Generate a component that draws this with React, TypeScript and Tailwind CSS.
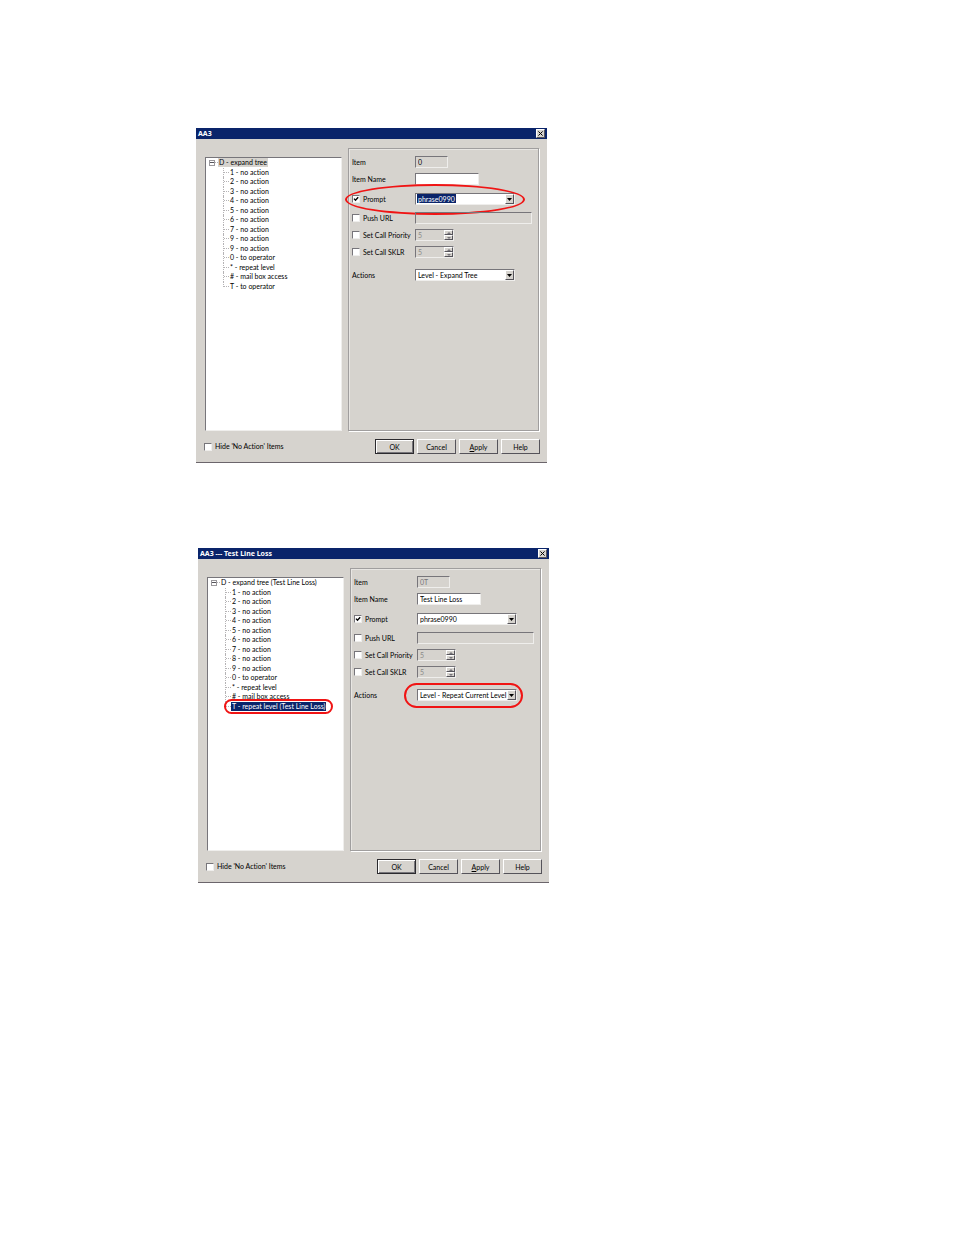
import type { ReactNode } from "react";

interface TreeEntry {
  key: string;
  action: string;
}

interface DialogProps {
  id: string;
  title: string;
  root: string;
  entries: TreeEntry[];
  selected: string;
  item: string;
  itemDim?: boolean;
  itemName: string;
  promptSelected?: boolean;
  action: string;
  circled: "prompt" | "action";
}

const noActions: TreeEntry[] = ["1", "2", "3", "4", "5", "6", "7", "8", "9"].map((key) => ({
  key,
  action: "no action",
}));

const commonEntries: TreeEntry[] = [
  ...noActions,
  { key: "0", action: "to operator" },
  { key: "*", action: "repeat level" },
  { key: "#", action: "mail box access" },
];

// the first tree lists key 9 twice, in place of 8
const firstEntries: TreeEntry[] = [
  ...commonEntries.map((e) => (e.key === "8" ? { ...e, key: "9" } : e)),
  { key: "T", action: "to operator" },
];

const secondEntries: TreeEntry[] = [...commonEntries, { key: "T", action: "repeat level (Test Line Loss)" }];

const sunken = "border border-t-[#77757a] border-l-[#77757a] border-r-[#efeeec] border-b-[#efeeec]";
const raised = "border border-t-white border-l-white border-r-[#55535a] border-b-[#55535a]";

const CloseIcon = () => (
  <svg className="h-[5px] w-[5px]" viewBox="0 0 6 6" stroke="#000" strokeWidth="1.2">
    <path d="M0.5 0.5L5.5 5.5M5.5 0.5L0.5 5.5" />
  </svg>
);

const ArrowIcon = () => (
  <svg className="h-[3px] w-[5px]" viewBox="0 0 5 3">
    <path d="M0 0H5L2.5 3Z" fill="#000" />
  </svg>
);

const SpinIcon = ({ down }: { down?: boolean }) => (
  <svg className="h-[2px] w-[4px]" viewBox="0 0 4 2">
    <path d={down ? "M0 0H4L2 2Z" : "M0 2H4L2 0Z"} fill="#77757a" />
  </svg>
);

function Check({ id, checked }: { id: string; checked?: boolean }) {
  return (
    <span className="relative mr-[3px] flex h-[8px] w-[8px] shrink-0">
      <input
        id={id}
        type="checkbox"
        defaultChecked={checked}
        className={`peer h-[8px] w-[8px] appearance-none bg-white ${sunken}`}
      />
      <svg
        className="pointer-events-none absolute inset-0 hidden h-[8px] w-[8px] peer-checked:block"
        viewBox="0 0 8 8"
        fill="none"
        stroke="#000"
        strokeWidth="1.4"
      >
        <path d="M2 3.6L3.5 5.3L6.2 2.3" />
      </svg>
    </span>
  );
}

function Select({ id, value, highlight }: { id: string; value: string; highlight?: boolean }) {
  return (
    <span className={`relative flex h-[12px] w-[100px] bg-white ${sunken}`}>
      <select
        id={id}
        defaultValue={value}
        className={`w-full appearance-none pl-[2px] leading-[10px] outline-none ${
          highlight
            ? "bg-[linear-gradient(#0a246a,#0a246a)] bg-[length:39px_9px] bg-[position:1px_0px] bg-no-repeat text-white"
            : ""
        }`}
      >
        <option>{value}</option>
      </select>
      <span
        className={`pointer-events-none absolute top-0 right-0 flex h-[10px] w-[9px] items-center justify-center bg-[#d6d3ce] ${raised}`}
      >
        <ArrowIcon />
      </span>
    </span>
  );
}

function Spinner({ id }: { id: string }) {
  return (
    <span className={`flex h-[12px] w-[39px] ${sunken}`}>
      <input
        id={id}
        type="number"
        disabled
        defaultValue={5}
        className="w-[28px] appearance-none pl-[2px] leading-[10px] text-[#8c8a88] [-moz-appearance:textfield] [&::-webkit-inner-spin-button]:appearance-none"
      />
      <span className="flex w-[9px] flex-col">
        <button disabled aria-label="Increase" className={`flex h-[5px] items-center justify-center ${raised}`}>
          <SpinIcon />
        </button>
        <button disabled aria-label="Decrease" className={`flex h-[5px] items-center justify-center ${raised}`}>
          <SpinIcon down />
        </button>
      </span>
    </span>
  );
}

interface RowProps {
  id: string;
  label: string;
  check?: "on" | "off";
  className?: string;
  children: ReactNode;
}

function Row({ id, label, check, className = "", children }: RowProps) {
  return (
    <div className={`relative flex h-[12px] items-center ${className}`}>
      <div className="flex w-[63px] shrink-0 items-center">
        {check && <Check id={`${id}-on`} checked={check === "on"} />}
        <label htmlFor={check ? `${id}-on` : id}>{label}</label>
      </div>
      {children}
    </div>
  );
}

function Tree({ root, entries, selected }: { root: string; entries: TreeEntry[]; selected: string }) {
  return (
    <ul className={`mt-[9px] w-[137px] shrink-0 bg-white pl-[3px] ${sunken}`}>
      <li className="grid h-[133px] auto-rows-fr">
        <div className="flex items-center">
          <button
            aria-label="Collapse"
            className="flex h-[6px] w-[6px] items-center justify-center border border-[#9a989c]"
          >
            <span className="h-px w-[4px] bg-[#55535a]" />
          </button>
          <span className="w-[3px] border-t border-dotted border-[#b5b3b5]" />
          <span className={`px-px leading-[9px] ${selected === "root" ? "bg-[#d6d3ce]" : ""}`}>{root}</span>
        </div>
        {entries.map((entry, i) => {
          const active = entry.key === selected;
          const last = i === entries.length - 1;
          return (
            <div key={i} className="ml-[14px] flex items-center">
              <span className={`border-l border-dotted border-[#b5b3b5] ${last ? "h-[5px] self-start" : "h-full"}`} />
              <span className="w-[5px] border-t border-dotted border-[#b5b3b5]" />
              <span className={`relative px-px leading-[9px] ${active ? "bg-[#0a246a] text-white" : ""}`}>
                {entry.key} - {entry.action}
                {active && (
                  <span className="pointer-events-none absolute -inset-x-[7px] -inset-y-[3px] rounded-full border-2 border-[#f01414]" />
                )}
              </span>
            </div>
          );
        })}
      </li>
    </ul>
  );
}

function Dialog(props: DialogProps) {
  const { id, title, root, entries, selected, item, itemDim, itemName, promptSelected, action, circled } = props;
  const button = "h-[15px] w-[39px] text-center leading-[12px]";

  return (
    <section className="w-[351px] border-b border-[#6b656b] bg-[#d6d3ce]">
      <header className="flex h-[11px] items-center justify-between bg-[#0a246a] pr-[2px] pl-[2px]">
        <h2 className="font-['Noto_Sans','Open_Sans',sans-serif] text-[7px] leading-[11px] font-bold text-white">
          {title}
        </h2>
        <button
          aria-label="Close"
          className={`flex h-[9px] w-[9px] items-center justify-center bg-[#d6d3ce] ${raised}`}
        >
          <CloseIcon />
        </button>
      </header>

      <div className="flex h-[292px] gap-[6px] pt-[9px] pr-[8px] pl-[9px]">
        <Tree root={root} entries={entries} selected={selected} />

        <div className="flex-1 border border-[#a09e9e] pt-[7px] pl-[3px] shadow-[1px_1px_0_#fff,inset_1px_1px_0_#e8e6e3]">
          <Row id={`${id}-item`} label="Item">
            <input
              id={`${id}-item`}
              readOnly
              defaultValue={item}
              className={`h-[12px] w-[33px] pl-[2px] ${sunken} ${itemDim ? "text-[#77757a]" : ""}`}
            />
          </Row>
          <Row id={`${id}-name`} label="Item Name" className="mt-[5px]">
            <input
              id={`${id}-name`}
              defaultValue={itemName}
              className={`h-[12px] w-[64px] bg-white pl-[2px] ${sunken}`}
            />
          </Row>
          <Row id={`${id}-prompt`} label="Prompt" check="on" className="mt-[8px]">
            <Select id={`${id}-prompt`} value="phrase0990" highlight={promptSelected} />
            {circled === "prompt" && (
              <span className="pointer-events-none absolute -top-[9px] -left-[7px] h-[31px] w-[180px] rounded-[50%] border-2 border-[#f01414]" />
            )}
          </Row>
          <Row id={`${id}-url`} label="Push URL" check="off" className="mt-[7px]">
            <input id={`${id}-url`} disabled aria-label="Push URL" className={`h-[12px] w-[117px] ${sunken}`} />
          </Row>
          <Row id={`${id}-priority`} label="Set Call Priority" check="off" className="mt-[5px]">
            <Spinner id={`${id}-priority`} />
          </Row>
          <Row id={`${id}-sklr`} label="Set Call SKLR" check="off" className="mt-[5px]">
            <Spinner id={`${id}-sklr`} />
          </Row>
          <Row id={`${id}-action`} label="Actions" className="mt-[11px]">
            <Select id={`${id}-action`} value={action} />
            {circled === "action" && (
              <span className="pointer-events-none absolute -top-[6px] left-[50px] h-[25px] w-[119px] rounded-full border-2 border-[#f01414]" />
            )}
          </Row>
        </div>
      </div>

      <footer className="flex items-center justify-between pt-[8px] pr-[7px] pb-[8px] pl-[8px]">
        <div className="flex items-center">
          <Check id={`${id}-hide`} />
          <label htmlFor={`${id}-hide`}>Hide 'No Action' Items</label>
        </div>
        <div className="flex gap-[3px]">
          <button
            className={`${button} border border-[#2b2a2e] shadow-[inset_1px_1px_0_#fff,inset_-1px_-1px_0_#77757a]`}
          >
            OK
          </button>
          <button className={`${button} ${raised}`}>Cancel</button>
          <button className={`${button} ${raised}`}>
            <u>A</u>pply
          </button>
          <button className={`${button} ${raised}`}>Help</button>
        </div>
      </footer>
    </section>
  );
}

export default function App() {
  return (
    <main className="min-h-screen bg-white pt-[128px] pb-[128px] pl-[196px] font-['Lato','Liberation_Sans',sans-serif] text-[7px] leading-[9px] whitespace-nowrap text-black [font-variant-ligatures:none]">
      <Dialog
        id="first"
        title="AA3"
        root="D - expand tree"
        entries={firstEntries}
        selected="root"
        item="0"
        itemName=""
        promptSelected
        action="Level - Expand Tree"
        circled="prompt"
      />
      <div className="mt-[85px] ml-[2px]">
        <Dialog
          id="second"
          title="AA3 --- Test Line Loss"
          root="D - expand tree (Test Line Loss)"
          entries={secondEntries}
          selected="T"
          item="0T"
          itemDim
          itemName="Test Line Loss"
          action="Level - Repeat Current Level"
          circled="action"
        />
      </div>
    </main>
  );
}
